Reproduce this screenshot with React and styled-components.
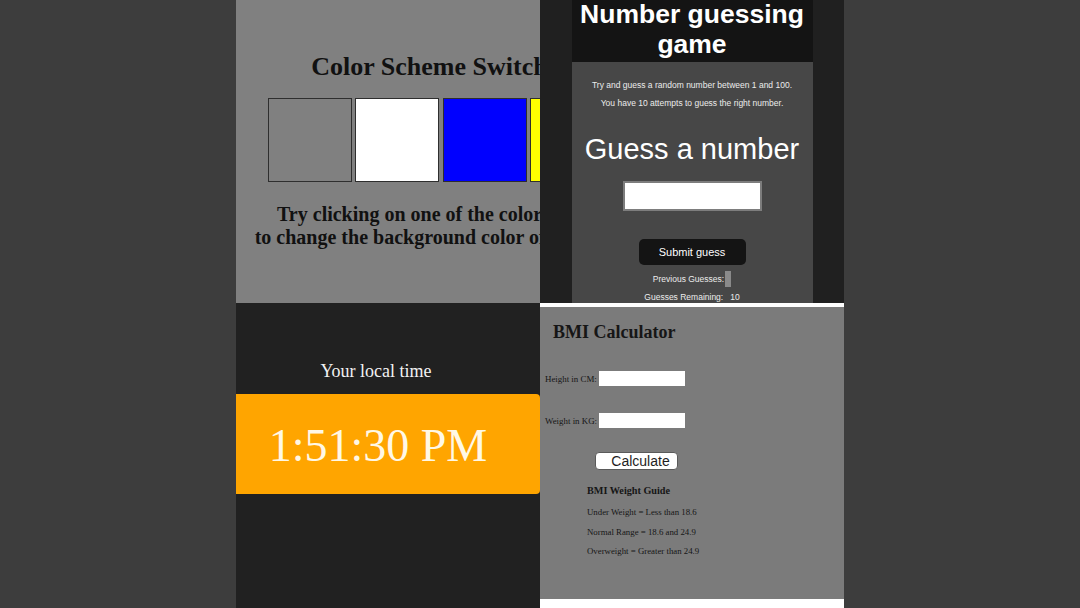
import styled, { createGlobalStyle } from 'styled-components';

const GlobalStyle = createGlobalStyle`
  html, body {
    margin: 0;
    padding: 0;
    background: #3d3d3d;
    height: 100%;
    overflow: hidden;
  }
  #root {
    height: 100%;
  }
`;

const Page = styled.div`
  height: 608px;
  display: flex;
  justify-content: center;
`;

const Board = styled.div`
  width: 608px;
  display: grid;
  grid-template-columns: 304px 304px;
  grid-template-rows: 303px 305px;
`;

const Quadrant = styled.section`
  overflow: hidden;
  background: ${props => props.bg};
  box-sizing: border-box;
`;

/* color scheme switcher */
const SwitcherStage = styled.div`
  width: 410px;
  text-align: center;
  font-family: 'Liberation Serif', 'Times New Roman', serif;
  color: #111;
`;

const SwitcherTitle = styled.h1`
  margin: 52px 0 0;
  font-size: 26px;
  line-height: 30px;
  font-weight: bold;
  white-space: nowrap;
`;

const Swatches = styled.div`
  margin-top: 16px;
  display: flex;
  justify-content: center;
  gap: 3.4px;
`;

const Swatch = styled.div`
  width: 84px;
  height: 84px;
  box-sizing: border-box;
  border: 1px solid #2e2e2e;
  background: ${props => props.color};
`;

const SwitcherHint = styled.p`
  margin: 21px 0 0;
  font-size: 20px;
  line-height: 23px;
  font-weight: bold;
  white-space: nowrap;
`;

/* number guessing game */
const GameColumn = styled.div`
  width: 241px;
  margin: 0 auto;
  height: 100%;
  background: #474747;
  font-family: 'Liberation Sans', Arial, sans-serif;
  color: #ececec;
  text-align: center;
`;

const GameHeader = styled.header`
  background: #141414;
  padding-bottom: 2px;
`;

const GameTitle = styled.h1`
  margin: 0;
  position: relative;
  top: -1px;
  font-size: 26.5px;
  line-height: 30px;
  font-weight: bold;
  color: #fff;
`;

const GameBody = styled.div`
  padding-top: 18px;
  display: flex;
  flex-direction: column;
  align-items: center;
`;

const SmallText = styled.p`
  margin: ${props => props.gap || 0}px 0 0;
  font-size: 8.5px;
  line-height: 10px;
  white-space: nowrap;
  display: flex;
  align-items: center;
`;

const GuessHeading = styled.h2`
  margin: 24px 0 0;
  font-size: 29px;
  line-height: 34px;
  font-weight: normal;
  color: #fff;
`;

const GuessInput = styled.input`
  margin-top: 15px;
  width: 139px;
  height: 30px;
  box-sizing: border-box;
  border: 2px solid #7d7d7d;
  background: #fff;
`;

const SubmitButton = styled.button`
  margin-top: 28px;
  width: 107px;
  height: 26px;
  border: none;
  border-radius: 5px;
  background: #141414;
  color: #fff;
  font-family: 'Liberation Sans', Arial, sans-serif;
  font-size: 11px;
`;

const GuessBox = styled.span`
  display: inline-block;
  width: 6px;
  height: 16px;
  margin-left: 1px;
  background: #8a8a8a;
`;

const Count = styled.span`
  margin-left: 7px;
`;

/* local time */
const ClockPanel = styled.div`
  padding-top: 58px;
  font-family: 'Liberation Serif', 'Times New Roman', serif;
`;

const ClockLabel = styled.div`
  padding-right: 24px;
  text-align: center;
  font-size: 18px;
  line-height: 21px;
  color: #f2f2f2;
`;

const ClockBar = styled.div`
  margin-top: 12px;
  height: 100px;
  box-sizing: border-box;
  padding: 3px 20px 0 0;
  background: #ffa500;
  border-radius: 0 4px 4px 0;
  text-align: center;
  font-size: 46px;
  line-height: 97px;
  color: #fff8e6;
`;

/* bmi */
const BmiPanel = styled(Quadrant)`
  border-top: 4px solid #fff;
  border-bottom: 9px solid #fff;
  padding-top: 15px;
  font-family: 'Liberation Serif', 'Times New Roman', serif;
  color: #161616;
`;

const BmiTitle = styled.h1`
  margin: 0 0 0 13px;
  font-size: 18px;
  line-height: 21px;
  font-weight: bold;
`;

const FieldRow = styled.label`
  margin: ${props => props.gap}px 0 0 5px;
  height: 15px;
  display: flex;
  align-items: center;
  gap: 2px;
  font-size: 8.9px;
`;

const FieldInput = styled.input`
  width: 86px;
  height: 15px;
  box-sizing: border-box;
  border: none;
  background: #fff;
  padding: 0;
`;

const CalcButton = styled.button`
  margin: 24px 0 0 55px;
  width: 83px;
  height: 18px;
  box-sizing: border-box;
  padding: 0 0 0 8px;
  border: 1px solid #5a5a5a;
  border-radius: 4px;
  background: #fff;
  font-family: 'Liberation Sans', Arial, sans-serif;
  font-size: 14px;
  line-height: 16px;
  color: #1e1e1e;
  display: block;
`;

const Guide = styled.div`
  margin: 15px 0 0 47px;
`;

const GuideTitle = styled.h3`
  margin: 0;
  font-size: 10.2px;
  line-height: 12px;
  font-weight: bold;
`;

const GuideLine = styled.p`
  margin: ${props => props.first ? 9 : 7.5}px 0 0;
  font-size: 8.8px;
  line-height: 12px;
`;

const swatches = ['#808080', '#ffffff', '#0000ff', '#ffff00'];

const guide = [
  'Under Weight = Less than 18.6',
  'Normal Range = 18.6 and 24.9',
  'Overweight = Greater than 24.9',
];

export default function App() {
  return (
    <>
      <GlobalStyle />
      <Page>
        <Board>
          <Quadrant bg="#808080">
            <SwitcherStage>
              <SwitcherTitle>Color Scheme Switcher</SwitcherTitle>
              <Swatches>
                {swatches.map(c => <Swatch key={c} color={c} />)}
              </Swatches>
              <SwitcherHint>
                Try clicking on one of the colors above
                <br />
                to change the background color of the page.
              </SwitcherHint>
            </SwitcherStage>
          </Quadrant>

          <Quadrant bg="#202020">
            <GameColumn>
              <GameHeader>
                <GameTitle>Number guessing<br />game</GameTitle>
              </GameHeader>
              <GameBody>
                <SmallText>Try and guess a random number between 1 and 100.</SmallText>
                <SmallText gap={8}>You have 10 attempts to guess the right number.</SmallText>
                <GuessHeading>Guess a number</GuessHeading>
                <GuessInput type="text" />
                <SubmitButton>Submit guess</SubmitButton>
                <SmallText gap={6} style={{ lineHeight: '16px' }}>
                  Previous Guesses:<GuessBox />
                </SmallText>
                <SmallText gap={5}>
                  Guesses Remaining:<Count>10</Count>
                </SmallText>
              </GameBody>
            </GameColumn>
          </Quadrant>

          <Quadrant bg="#212121">
            <ClockPanel>
              <ClockLabel>Your local time</ClockLabel>
              <ClockBar>1:51:30 PM</ClockBar>
            </ClockPanel>
          </Quadrant>

          <BmiPanel bg="#7b7b7b">
            <BmiTitle>BMI Calculator</BmiTitle>
            <FieldRow gap={28}>
              Height in CM: <FieldInput type="text" />
            </FieldRow>
            <FieldRow gap={27}>
              Weight in KG: <FieldInput type="text" />
            </FieldRow>
            <CalcButton>Calculate</CalcButton>
            <Guide>
              <GuideTitle>BMI Weight Guide</GuideTitle>
              {guide.map((line, i) => (
                <GuideLine key={line} first={i === 0}>{line}</GuideLine>
              ))}
            </Guide>
          </BmiPanel>
        </Board>
      </Page>
    </>
  );
}
